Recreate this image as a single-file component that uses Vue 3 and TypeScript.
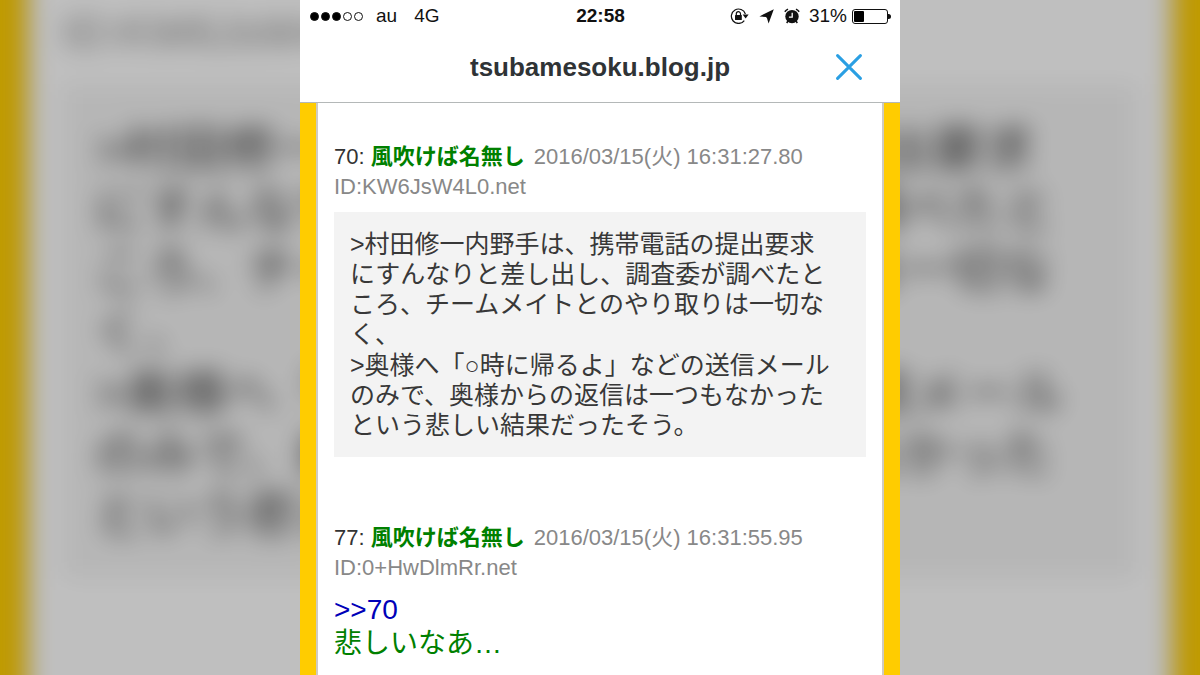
<script setup lang="ts">
interface Post {
  no: number
  name: string
  date: string
  id: string
  quote?: string[][]
  anchor?: number
  comment?: string
}

const posts: Post[] = [
  {
    no: 70,
    name: '風吹けば名無し',
    date: '2016/03/15(火) 16:31:27.80',
    id: 'ID:KW6JsW4L0.net',
    quote: [
      [
        '>村田修一内野手は、携帯電話の提出要求',
        'にすんなりと差し出し、調査委が調べたと',
        'ころ、チームメイトとのやり取りは一切な',
        'く、',
      ],
      [
        '>奥様へ「○時に帰るよ」などの送信メール',
        'のみで、奥様からの返信は一つもなかった',
        'という悲しい結果だったそう。',
      ],
    ],
  },
  {
    no: 77,
    name: '風吹けば名無し',
    date: '2016/03/15(火) 16:31:55.95',
    id: 'ID:0+HwDlmRr.net',
    anchor: 70,
    comment: '悲しいなあ…',
  },
]

// The backdrop is an enlarged, blurred view of the first post.
const layers = [
  { kind: 'backdrop', front: false, posts: posts.slice(0, 1) },
  { kind: 'phone', front: true, posts },
]
const signal = [true, true, true, false, false]
const battery = 31
</script>

<template>
  <div class="stage" lang="ja">
    <div
      v-for="layer in layers"
      :key="layer.kind"
      :class="layer.kind"
      :aria-hidden="!layer.front"
      :inert="!layer.front"
    >
      <header class="top">
        <div v-if="layer.front" class="status">
          <div class="carrier">
            <span class="signal">
              <i v-for="(on, n) in signal" :key="n" class="dot" :class="{ on }"></i>
            </span>
            <span>au</span>
            <span class="network">4G</span>
          </div>
          <time class="clock">22:58</time>
          <div class="indicators">
            <svg class="lock" width="19" height="16" viewBox="0 0 19 16">
              <path d="M14.3 12.6A7.2 7.2 0 1 1 15.4 6" fill="none" stroke="#111" stroke-width="1.2" />
              <path d="M12.6 6.6h6l-3 3.8z" fill="#111" />
              <rect x="5" y="7" width="6.8" height="4.9" rx=".5" fill="#111" />
              <path d="M6.3 7.2V5.8a2.1 2.1 0 0 1 4.2 0v1.4" fill="none" stroke="#111" stroke-width="1.2" />
            </svg>
            <svg class="arrow" width="15" height="15" viewBox="0 0 15 15">
              <path d="M14.8.2 9.6 14.6 8 9.2 7 8 .4 7.4z" fill="#111" />
            </svg>
            <svg class="alarm" width="16" height="16" viewBox="0 0 16 16">
              <circle cx="8" cy="8.6" r="6.7" fill="#111" />
              <path d="M.8 3.8A9 9 0 0 1 4 1.1M15.2 3.8A9 9 0 0 0 12 1.1" fill="none" stroke="#111" stroke-width="1.5" />
              <path d="m4 13-1.3 2M12 13l1.3 2" stroke="#111" stroke-width="1.5" />
              <path d="M8.2 4.8v4.3H4.9" fill="none" stroke="#fff" stroke-width="1.3" />
            </svg>
            <span class="percent">{{ battery }}%</span>
            <span class="battery"><i :style="{ width: battery + '%' }"></i></span>
          </div>
        </div>
        <div v-if="layer.front" class="bar">
          <h1 class="title">tsubamesoku.blog.jp</h1>
          <button class="close" type="button" aria-label="閉じる">
            <svg width="26" height="26" viewBox="0 0 26 26">
              <path d="m1.6 1.6 22.8 22.8M24.4 1.6 1.6 24.4" fill="none" stroke="#2a9fe3" stroke-width="3" stroke-linecap="round" />
            </svg>
          </button>
        </div>
      </header>
      <main class="page">
        <div class="sheet">
          <article v-for="post in layer.posts" :key="post.no" class="post">
            <div class="meta">
              <div v-if="layer.front">
                <span class="no">{{ post.no }}: </span><b class="name">{{ post.name }}</b>
                <time class="date">{{ post.date }}</time>
              </div>
              <div>{{ post.id }}</div>
            </div>
            <blockquote v-if="post.quote" class="quote">
              <p v-for="(lines, n) in post.quote" :key="n">
                <span v-for="line in lines" :key="line">{{ line }}</span>
              </p>
            </blockquote>
            <div v-if="post.comment" class="comment">
              <a href="#">&gt;&gt;{{ post.anchor }}</a>
              <p>{{ post.comment }}</p>
            </div>
          </article>
        </div>
      </main>
    </div>
  </div>
</template>

<style>
body {
  margin: 0;
}
</style>

<style scoped>
.stage {
  position: relative;
  display: flex;
  justify-content: center;
  height: 100vh;
  overflow: hidden;
  background: #c29f00;
  color: #383838;
  font-family: "Liberation Sans", "Noto Sans CJK JP", sans-serif;
}
.phone,
.backdrop {
  display: flex;
  flex-direction: column;
  width: 50%;
  height: 100%;
}
.phone {
  position: relative;
  overflow: hidden;
}
.backdrop {
  position: absolute;
  top: 0;
  left: 25%;
  transform: scale(2.02);
  filter: blur(6px) brightness(0.75);
}
.backdrop .meta {
  padding-top: 30px;
}
.top {
  box-sizing: border-box;
  flex: none;
  height: 103px;
  background: #fff;
  border-bottom: 1px solid #b4b8b8;
}
.status {
  display: grid;
  grid-template-columns: 1fr auto 1fr;
  align-items: center;
  height: 32px;
  padding: 0 9px 0 10px;
  color: #111;
  font-size: 19px;
  line-height: 32px;
}
.carrier,
.indicators {
  display: flex;
  align-items: center;
}
.indicators {
  justify-content: flex-end;
}
.signal {
  display: flex;
  gap: 2px;
  margin-right: 13px;
}
.dot {
  box-sizing: border-box;
  width: 9px;
  height: 9px;
  border: 1px solid #111;
  border-radius: 50%;
}
.dot.on {
  background: #000;
}
.network {
  margin-left: 17px;
}
.clock {
  font-weight: bold;
}
.arrow {
  margin-left: 10px;
}
.alarm {
  margin-left: 10px;
}
.percent {
  margin: 0 5px 0 9px;
}
.battery {
  position: relative;
  box-sizing: border-box;
  display: flex;
  width: 36px;
  height: 15px;
  margin-right: 3px;
  padding: 1px;
  border: 1px solid #111;
  border-radius: 3px;
}
.battery i {
  background: #000;
  border-radius: 1px;
}
.battery::after {
  content: "";
  position: absolute;
  top: 4px;
  right: -4px;
  width: 3px;
  height: 5px;
  background: #111;
  border-radius: 0 3px 3px 0;
}
.bar {
  display: grid;
  grid-template-columns: 1fr auto 1fr;
  align-items: center;
  height: 70px;
  padding: 0 38px;
}
.title {
  grid-column: 2;
  margin: 0;
  color: #2f3336;
  font-size: 26px;
  line-height: 32px;
}
.close {
  display: flex;
  justify-self: end;
  padding: 0;
  background: none;
  border: 0;
  cursor: pointer;
}
.page {
  flex: 1;
  padding: 0 16px;
  background: #fc0;
}
.sheet {
  box-sizing: border-box;
  height: 100%;
  padding: 39px 16px 0;
  background: #fff;
  border: solid #cfcbc0;
  border-width: 0 2px;
}
.post + .post {
  margin-top: 66px;
}
.meta {
  color: #888;
  font-size: 22px;
  line-height: 30px;
  white-space: nowrap;
}
.no {
  color: #333;
}
.name {
  color: #008000;
}
.date {
  margin-left: 9px;
}
.quote {
  display: grid;
  gap: 1px;
  margin: 10px 0 0;
  padding: 17px 16px;
  background: #f3f3f3;
  font-size: 25px;
  line-height: 30px;
  white-space: nowrap;
}
.quote p,
.comment p {
  margin: 0;
}
.quote span {
  display: block;
}
.comment {
  margin-top: 10px;
  color: #008000;
  font-size: 28px;
  line-height: 34px;
}
.comment a {
  display: block;
  width: fit-content;
  color: #0000b8;
  text-decoration: none;
}
</style>
